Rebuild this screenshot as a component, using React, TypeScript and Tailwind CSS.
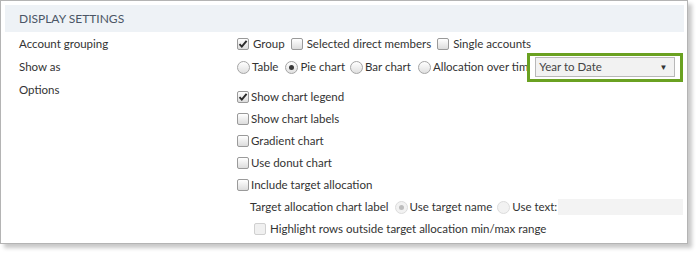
import React from 'react';

const font = { fontFamily: 'Lato, "Open Sans", sans-serif' };

const Check = ({ checked, disabled }: { checked?: boolean; disabled?: boolean }) => (
  <span
    className={`relative inline-flex h-[12px] w-[12px] shrink-0 items-center justify-center rounded-[2px] border ${
      disabled ? 'border-[#d0d0d0] bg-[#f0f0f0]' : 'border-[#9a9a9a] bg-gradient-to-b from-[#ffffff] to-[#dcdcdc]'
    }`}
  >
    {checked && (
      <svg width="10" height="10" viewBox="0 0 10 10">
        <path d="M1.5 5.2 L3.8 7.6 L8.6 1.8" fill="none" stroke="#2b2b2b" strokeWidth="1.9" />
      </svg>
    )}
  </span>
);

const Radio = ({ checked, disabled }: { checked?: boolean; disabled?: boolean }) => (
  <span
    className={`inline-flex h-[13px] w-[13px] shrink-0 items-center justify-center rounded-full border ${
      disabled ? 'border-[#dcdcdc] bg-[#f2f2f2]' : 'border-[#a5a5a5] bg-gradient-to-b from-[#ffffff] to-[#e0e0e0]'
    }`}
  >
    {checked && <span className={`h-[5px] w-[5px] rounded-full ${disabled ? 'bg-[#bdbdbd]' : 'bg-[#3a3a3a]'}`} />}
  </span>
);

const Option = ({ children, checked }: { children: React.ReactNode; checked?: boolean }) => (
  <div className="flex h-[22px] items-center gap-[2px]">
    <Check checked={checked} />
    <span>{children}</span>
  </div>
);

export default function App() {
  return (
    <div className="h-[254px] w-[697px] whitespace-nowrap bg-white text-[11.5px] text-[#333]" style={font}>
      <div className="h-[244px] w-[688px] border border-[#b4b4b4] bg-white p-[4px] pr-[3px] shadow-[4px_4px_4px_rgba(0,0,0,0.22)]">
        <div className="flex h-[27px] items-center bg-[#eef2f6] pl-[14px] text-[12px] text-[#4b5666]">
          DISPLAY SETTINGS
        </div>

        <div className="flex h-[23px] items-center">
          <div className="w-[232px] shrink-0 pl-[14px]">Account grouping</div>
          <div className="flex items-center">
            <Check checked />
            <span className="ml-[4px] mr-[6px]">Group</span>
            <Check />
            <span className="ml-[4px] mr-[6px]">Selected direct members</span>
            <Check />
            <span className="ml-[4px]">Single accounts</span>
          </div>
        </div>

        <div className="flex h-[24px] items-center">
          <div className="w-[232px] shrink-0 pl-[14px]">Show as</div>
          <div className="flex items-center">
            <Radio />
            <span className="ml-[2px] mr-[7px]">Table</span>
            <Radio checked />
            <span className="ml-[2px] mr-[5px]">Pie chart</span>
            <Radio />
            <span className="ml-[2px] mr-[7px]">Bar chart</span>
            <Radio />
            <span className="ml-[2px]">Allocation over time:</span>
            <div className="relative ml-[-10px] flex h-[29px] w-[156px] shrink-0 items-center justify-center border-[3px] border-[#6aa121] bg-white">
              <div className="flex h-[20px] w-[140px] items-center justify-between border border-[#b8b8b8] bg-[#f2f2f2] pl-[3px] pr-[7px] text-[#444]">
                <span>Year to Date</span>
                <span className="text-[8px] text-[#333]">▼</span>
              </div>
            </div>
          </div>
        </div>

        <div className="flex">
          <div className="w-[232px] shrink-0 pl-[14px] pt-[2px]">Options</div>
          <div className="flex flex-col pt-[7px]">
            <Option checked>Show chart legend</Option>
            <Option>Show chart labels</Option>
            <Option>Gradient chart</Option>
            <Option>Use donut chart</Option>
            <Option>Include target allocation</Option>
            <div className="flex h-[22px] items-center pl-[13px]">
              <span className="mr-[6px]">Target allocation chart label</span>
              <Radio checked disabled />
              <span className="ml-[2px] mr-[5px]">Use target name</span>
              <Radio disabled />
              <span className="ml-[2px]">Use text:</span>
              <div className="ml-[1px] h-[16px] w-[125px] shrink-0 bg-[#f3f3f3]" />
            </div>
            <div className="flex h-[22px] items-center gap-[3px] pl-[17px]">
              <Check disabled />
              <span className="ml-[1px]">Highlight rows outside target allocation min/max range</span>
            </div>
          </div>
        </div>
      </div>
    </div>
  );
}
